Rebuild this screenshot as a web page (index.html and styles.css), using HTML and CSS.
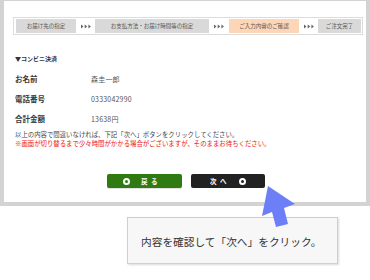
FILE: index.html
```html
<!DOCTYPE html>
<html lang="ja">
<head>
<meta charset="utf-8">
<link rel="stylesheet" href="styles.css">
</head>
<body>
<div class="frame">
  <div class="steps">
    <div class="step s1">お届け先の指定</div>
    <div class="arr a1"><svg width="10" height="5" viewBox="0 0 10 5"><path d="M0 0.5L2.5 2.5L0 4.5ZM3.7 0.5L6.2 2.5L3.7 4.5ZM7.4 0.5L9.9 2.5L7.4 4.5Z" fill="#666"/></svg></div>
    <div class="step s2">お支払方法・お届け時間等の指定</div>
    <div class="arr a2"><svg width="10" height="5" viewBox="0 0 10 5"><path d="M0 0.5L2.5 2.5L0 4.5ZM3.7 0.5L6.2 2.5L3.7 4.5ZM7.4 0.5L9.9 2.5L7.4 4.5Z" fill="#666"/></svg></div>
    <div class="step s3 current">ご入力内容のご確認</div>
    <div class="arr a3"><svg width="10" height="5" viewBox="0 0 10 5"><path d="M0 0.5L2.5 2.5L0 4.5ZM3.7 0.5L6.2 2.5L3.7 4.5ZM7.4 0.5L9.9 2.5L7.4 4.5Z" fill="#666"/></svg></div>
    <div class="step s4">ご注文完了</div>
  </div>
  <div class="content">
    <div class="heading">▼コンビニ決済</div>
    <div class="rows">
      <div class="label">お名前</div><div class="value">森圭一郎</div>
      <div class="label">電話番号</div><div class="value">0333042990</div>
      <div class="label">合計金額</div><div class="value">13638円</div>
    </div>
    <div class="note">
      <p>以上の内容で間違いなければ、下記「次へ」ボタンをクリックしてください。</p>
      <p class="warn">※画面が切り替るまで少々時間がかかる場合がございますが、そのままお待ちください。</p>
    </div>
    <div class="buttons">
      <div class="btn back"><span class="ico"></span><span class="btxt">戻 る</span></div>
      <div class="btn next"><span class="btxt">次 へ</span><span class="ico"></span></div>
    </div>
  </div>
</div>
<div class="caption">内容を確認して「次へ」をクリック。</div>
<svg class="pointer" width="40" height="45" viewBox="258 184 40 45">
  <polygon points="268,186 295,204 284,208 288,224 276,227 272,212 262,216" fill="#6d7ff6"/>
</svg>
</body>
</html>
```

FILE: styles.css
```css
html, body {
  margin: 0;
  padding: 0;
  background: #fff;
}
body {
  width: 370px;
  height: 280px;
  position: relative;
  font-family: "Noto Sans CJK JP", "Noto Sans", sans-serif;
  color: #333;
  overflow: hidden;
}
.frame {
  box-sizing: border-box;
  width: 370px;
  height: 206px;
  border: 4px solid #d3d3d3;
  border-top-width: 1px;
  padding-top: 16px;
}
.steps {
  box-sizing: border-box;
  display: flex;
  align-items: stretch;
  margin-left: 9px;
  width: 350px;
  height: 18px;
  border: 1px solid #dcdcdc;
  padding: 1px;
  background: #fff;
}
.step {
  display: flex;
  align-items: center;
  justify-content: center;
  background: #d9d9d9;
  color: #555;
  font-size: 5.5px;
  white-space: nowrap;
}
.step.current {
  background: #fdd6b8;
}
.s1 { width: 60px; margin-left: 1px; }
.s2 { width: 114px; }
.s3 { width: 70px; }
.s4 { width: 43px; }
.arr {
  display: flex;
  align-items: center;
  justify-content: center;
}
.arr svg { display: block; }
.a1 { width: 19px; }
.a2 { width: 20px; }
.a3 { width: 19px; }
.content {
  padding-left: 11px;
}
.heading {
  margin-top: 19px;
  height: 10px;
  line-height: 10px;
  font-size: 6px;
  font-weight: bold;
  color: #333;
}
.rows {
  margin-top: 4px;
  display: grid;
  grid-template-columns: 76px auto;
  grid-auto-rows: 20px;
  align-items: center;
}
.label {
  font-size: 7.5px;
  font-weight: bold;
  color: #3a3a3a;
}
.value {
  font-size: 7px;
  color: #555;
  padding-top: 2px;
  letter-spacing: 0.2px;
}
.note {
  margin-top: 3px;
  font-size: 6.4px;
  line-height: 8.5px;
  color: #444;
}
.note p {
  margin: 0;
  white-space: nowrap;
}
.note .warn {
  color: #ee1111;
}
.buttons {
  margin-top: 26px;
  margin-left: 92px;
  display: flex;
  gap: 9px;
}
.btn {
  box-sizing: border-box;
  width: 75px;
  height: 14px;
  border-radius: 2px;
  display: flex;
  align-items: center;
  color: #fff;
  font-size: 6.5px;
  font-weight: bold;
}
.btn.back {
  background: #2f7a12;
  padding-left: 16px;
  gap: 11px;
  box-shadow: 0 1px 0 #e2e2e2;
}
.btn.next {
  background: #222;
  width: 74px;
  padding-left: 19px;
  gap: 12px;
}
.btxt {
  letter-spacing: 1px;
  white-space: nowrap;
}
.ico {
  box-sizing: border-box;
  width: 7px;
  height: 7px;
  border-radius: 50%;
  border: 2px solid #fff;
  background: #fff;
}
.back .ico { background: #2f7a12; }
.next .ico { background: #222; }
.caption {
  box-sizing: border-box;
  margin-top: 11px;
  margin-left: 127px;
  width: 211px;
  height: 47px;
  background: #f7f7f7;
  border: 1px solid #cfcfcf;
  box-shadow: 1px 1px 2px rgba(0,0,0,0.15);
  padding: 17px 0 0 13px;
  font-size: 10.7px;
  line-height: 14px;
  color: #333;
  white-space: nowrap;
}
.pointer {
  position: absolute;
  left: 258px;
  top: 184px;
}
```
